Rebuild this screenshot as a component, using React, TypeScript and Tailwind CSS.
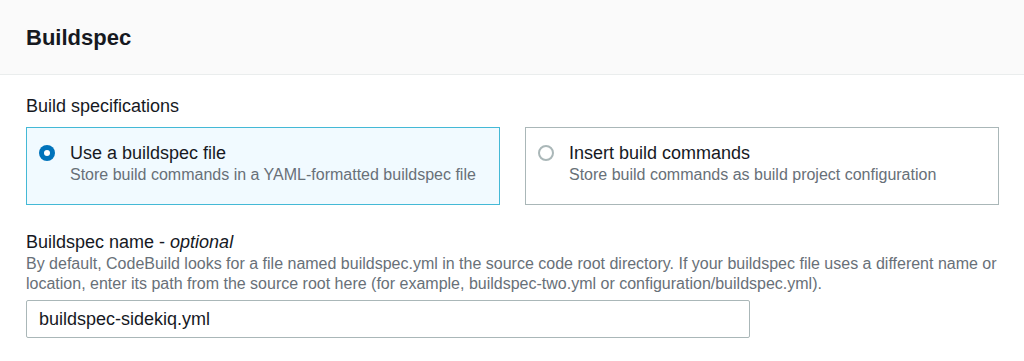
import { useState } from "react";

const options = [
  {
    id: "file",
    title: "Use a buildspec file",
    description: "Store build commands in a YAML-formatted buildspec file",
  },
  {
    id: "commands",
    title: "Insert build commands",
    description: "Store build commands as build project configuration",
  },
];

function Radio({ checked }: { checked: boolean }) {
  return checked ? (
    <span className="flex h-4 w-4 shrink-0 items-center justify-center rounded-full bg-[#0073bb]">
      <span className="h-[6px] w-[6px] rounded-full bg-white" />
    </span>
  ) : (
    <span className="h-4 w-4 shrink-0 rounded-full border-2 border-[#aab7b8] bg-white" />
  );
}

export default function App() {
  const [spec, setSpec] = useState("file");

  return (
    <div className="h-[361px] w-[1024px] overflow-hidden bg-white font-['Liberation_Sans',Arial,sans-serif] text-[#16191f]">
      <div className="h-[75px] border-b border-[#eaeded] bg-[#fafafa] px-[26px] pt-[24px]">
        <h2 className="text-[22px] font-bold leading-[28px]">Buildspec</h2>
      </div>

      <div className="pl-[26px] pr-[25px] pt-[20px]">
        <div className="text-[18px] leading-[22px]">Build specifications</div>

        <div className="mt-[10px] grid grid-cols-2 gap-[25px]">
          {options.map((opt) => {
            const checked = spec === opt.id;
            return (
              <button
                key={opt.id}
                type="button"
                onClick={() => setSpec(opt.id)}
                className={`flex h-[78px] items-start gap-[15px] border pl-[12px] pt-[14px] text-left ${
                  checked
                    ? "border-[#44b9d6] bg-[#f1faff]"
                    : "border-[#aab7b8] bg-white"
                }`}
              >
                <span className="flex h-[22px] items-center">
                  <Radio checked={checked} />
                </span>
                <span className="flex flex-col">
                  <span className="text-[18px] leading-[22px]">{opt.title}</span>
                  <span className="text-[16px] leading-[22px] text-[#687078]">
                    {opt.description}
                  </span>
                </span>
              </button>
            );
          })}
        </div>

        <div className="mt-[26px]">
          <label className="block text-[18px] leading-[22px]">
            Buildspec name - <i>optional</i>
          </label>
          <p className="mt-[1px] text-[16px] leading-[20px] text-[#687078]">
            By default, CodeBuild looks for a file named buildspec.yml in the
            source code root directory. If your buildspec file uses a different
            name or location, enter its path from the source root here (for
            example, buildspec-two.yml or configuration/buildspec.yml).
          </p>
          <input
            type="text"
            defaultValue="buildspec-sidekiq.yml"
            className="mt-[6px] block h-[38px] w-[724px] rounded-[2px] border border-[#aab7b8] bg-white px-[12px] text-[18px] leading-[22px] text-[#16191f] outline-none"
          />
        </div>
      </div>
    </div>
  );
}
